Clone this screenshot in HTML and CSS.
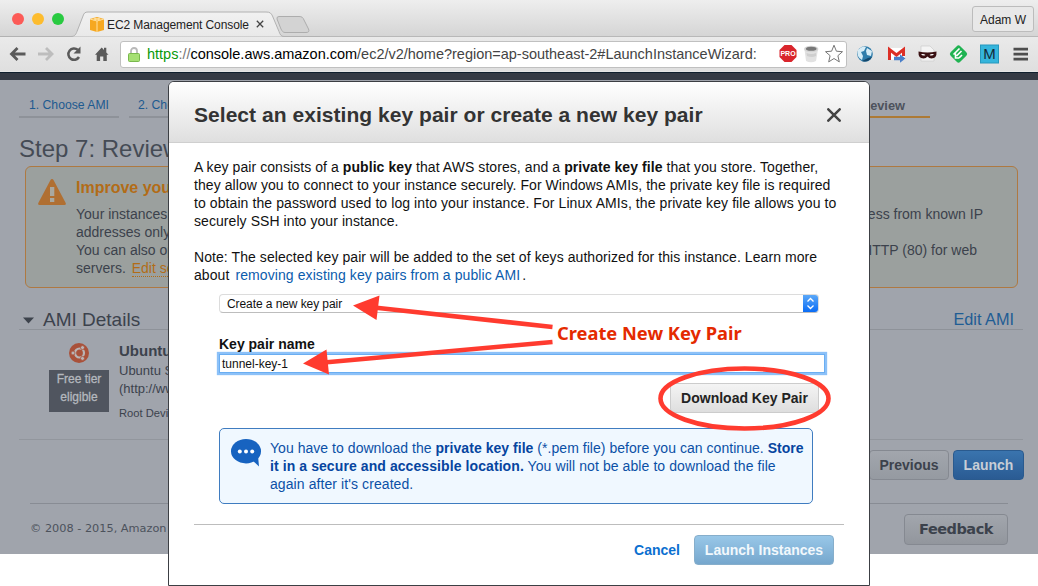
FILE: index.html
```html
<!DOCTYPE html>
<html lang="en">
<head>
<meta charset="utf-8">
<title>EC2 Management Console</title>
<link rel="stylesheet" href="styles.css">
</head>
<body>
<header class="chrome">
  <div class="tabstrip">
    <svg class="tab-shape" width="320" height="37" viewBox="0 0 320 37">
      <defs>
        <linearGradient id="tabfill" x1="0" y1="0" x2="0" y2="1"><stop offset="0" stop-color="#f1f1f1"/><stop offset="1" stop-color="#e9e9e9"/></linearGradient>
      </defs>
      <path d="M0 36.5H71C75 36.5 76 34 77 31.500L83 16C84 13 85 12 88 12H266C270 12 271 13 272.500 16L279 31.500C280 34.500 281 36.500 284 36.500H320" fill="url(#tabfill)" stroke="#b2b2b2"/>
      <path d="M279 16.500H299C302 16.500 303 17.500 304 20L308.500 29C309.500 31.500 308.500 32.500 306 32.500H285C283 32.500 282 31 281 29L277 19Q276.500 16.500 279 16.500Z" fill="#d3d3d3" stroke="#adadad"/>
    </svg>
    <div class="lights"><i class="red"></i><i class="yellow"></i><i class="green"></i></div>
    <div class="tab">
      <svg width="14" height="15" viewBox="0 0 14 15"><path d="M0 2 7 0l7 2v11l-7 2-7-2z" fill="#f6a821"/><path d="M0 2 7 4l7-2M7 4v11M3.500 1 10.500 3M10.500 1 3.500 3" stroke="#ffe0a0" fill="none"/></svg>
      <span class="tab-title">EC2 Management Console</span>
      <svg class="tab-x" width="8" height="8" viewBox="0 0 8 8"><path d="M.8.800 7.200 7.200M7.200.800.800 7.200" stroke="#444" stroke-width="1.300"/></svg>
    </div>
    <span class="user">Adam W</span>
  </div>
  <div class="toolbar">
    <svg class="nav" width="120" height="20" viewBox="0 0 120 20">
      <g fill="none" stroke-width="2.800"><path d="M17.500 10H4M9.500 4 3.500 10l6 6" stroke="#5a5a5a" transform="translate(8 0)"/><path d="M38 10H51.500M46 4l6 6-6 6" stroke="#bdbdbd"/><path d="M79 13A5.700 5.700 0 1 1 77.800 5.800" stroke="#5a5a5a" stroke-width="2.500"/></g>
      <path d="M80.500 2.500v7H73.500z" fill="#5a5a5a"/>
      <path d="M95 10.700 101.700 3.500l2.300 2.400V3.800h2.300V8.400l2.200 2.300h-1.700V17h-3.500v-4.500h-3.200V17H96.700v-6.300z" fill="#5a5a5a"/>
    </svg>
    <div class="omnibox">
      <svg width="12" height="15" viewBox="0 0 12 15"><path d="M3 7V4a3 3 0 0 1 6 0v3" fill="none" stroke="#b9b9b9" stroke-width="1.800"/><rect x=".5" y="6.500" width="11" height="8" rx="1" fill="#a5df73" stroke="#79b84d"/></svg>
      <span class="url"><b>https</b><i>://</i>console.aws.amazon.com<span class="path">/ec2/v2/home?region=ap-southeast-2#LaunchInstanceWizard:</span></span>
      <svg class="omni-icons" width="66" height="20" viewBox="0 0 66 20">
        <path d="M6.500 1h7l5 5v7l-5 5h-7l-5-5V6z" fill="#d9252c"/><text x="10" y="12.300" text-anchor="middle" class="pro">PRO</text>
        <path d="M26.500 5.500 28 17q5 2.500 10 0L40 5.500z" fill="#e2e2e2"/><ellipse cx="33.200" cy="5" rx="7.200" ry="3.300" fill="#d4d4d4"/><ellipse cx="33.200" cy="4.800" rx="5.300" ry="2" fill="#777"/><path d="M28.500 9q5 2 9.500 0v3q-4 2-9 0z" fill="#cfcfcf"/>
        <path d="m56 1.200 2.400 6 6.100.5-4.600 4 1.400 6.200-5.300-3.400-5.300 3.400 1.400-6.200-4.600-4 6.100-.5z" fill="#fff" stroke="#777"/>
      </svg>
    </div>
    <svg class="ext" width="176" height="22" viewBox="0 0 176 22">
      <circle cx="13" cy="11" r="7.800" fill="#2f7dab"/><path d="M6 7q4-5 8-3l-2 4-3 1 2 4-1 4Q4 14 6 7M15 5l5 3-1 5-4-1-1-4z" fill="#d6ecf6"/><path d="M10 18q6 2 10-4l-4 1z" fill="#14476b"/>
      <rect x="36" y="4.500" width="17" height="12.500" fill="#fff" stroke="#ddd" stroke-width=".5"/><path d="M37.500 17V6.500l7 5.500 7-5.500V13" fill="none" stroke="#dc2f26" stroke-width="3"/><path d="M42 13.800h6v-2.500l5.500 4.200-5.500 4.200v-2.400h-6z" fill="#4a7fc9"/>
      <path d="M69 3h9l4 4v11H69z" fill="#f4f4f4" stroke="#ccc" stroke-width=".7"/><path d="M66.500 8.500q9 2 18 0 .5 7-5 7-2.500 0-4-2-1.500 2-4 2-5.500 0-5-7z" fill="#3a1113"/><path d="M69 11.300q2.500-1 4.500.7-2.500 1.500-4.500-.7M82 11.300q-2.500-1-4.500.7 2.500 1.500 4.500-.7" fill="#fff"/>
      <rect x="99.700" y="4.200" width="13.600" height="13.600" rx="2.500" transform="rotate(45 106.500 11)" fill="#20b352"/><path d="m101.500 11.500 6-6M104.500 13l5-5M107 15l3-3M103.500 10.500v4.500h3.500" stroke="#fff" stroke-width="1.600" fill="none"/>
      <rect x="128.500" y="2" width="18" height="18" fill="#35b5dc" stroke="#2798bd"/><text x="137.500" y="15.500" text-anchor="middle" class="m">M</text>
      <path d="M161.500 6.200h14.500M161.500 11.200h14.500M161.500 16.200h14.500" stroke="#4e4e4e" stroke-width="2.800"/>
    </svg>
  </div>
</header>

<main class="page">
  <div class="topbar"></div>
  <nav class="steps">
    <span class="step s1">1. Choose AMI</span><span class="step s2">2. Choose</span><span class="step active">7. Review</span>
  </nav>
  <h1 class="title">Step 7: Review</h1>
  <section class="alert">
    <svg width="28" height="26" viewBox="0 0 28 26"><path d="M14 0q1 0 1.500 1L27.700 24q.6 2-1.200 2h-25Q-.3 26 .3 24L12.500 1Q13 0 14 0z" fill="#b06f32"/><path d="M12 8h4.300v9H12zM12 19h4.300v4H12z" fill="#a9a8a0"/></svg>
    <div class="alert-body">
      <h2>Improve your</h2>
      <p><span>Your instances</span><span>access from known IP</span></p>
      <p><span>addresses only.</span></p>
      <p><span>You can also open</span><span class="r2">HTTP (80) for web</span></p>
      <p><span>servers. <a>Edit sec</a></span></p>
    </div>
  </section>
  <div class="section-head"><svg width="11" height="7" viewBox="0 0 11 7"><path d="M0 .5h11l-5.500 6z" fill="#3d434c"/></svg><h3>AMI Details</h3><a>Edit AMI</a></div>
  <section class="ami">
    <div class="ami-badge">
      <svg width="20" height="20" viewBox="0 0 20 20"><circle cx="10" cy="10" r="10" fill="#a9513a"/><circle cx="10.500" cy="10" r="4.500" fill="none" stroke="#b9b4b5" stroke-width="2.200"/><g fill="#b9b4b5" stroke="#a9513a" stroke-width=".8"><circle cx="4" cy="10" r="2"/><circle cx="13.500" cy="4.600" r="2"/><circle cx="13.500" cy="15.400" r="2"/></g></svg>
      <span class="tier">Free tier<br>eligible</span>
    </div>
    <div class="ami-text"><b>Ubuntu</b><span>Ubuntu Se</span><span>(http://ww</span><small>Root Device</small></div>
  </section>
  <div class="actions"><span class="btn prev">Previous</span><span class="btn launch">Launch</span></div>
  <footer class="foot"><span class="copy">© 2008 - 2015, Amazon</span><span class="btn feedback">Feedback</span></footer>
</main>

<div class="modal">
  <div class="modal-head"><h2>Select an existing key pair or create a new key pair</h2>
    <svg width="14" height="14" viewBox="0 0 14 14"><path d="M1.300 1.300 12.700 12.700M12.700 1.300 1.300 12.700" stroke="#444" stroke-width="2.500" stroke-linecap="round"/></svg>
  </div>
  <div class="modal-body">
    <p class="para">
      <span>A key pair consists of a <b>public key</b> that AWS stores, and a <b>private key file</b> that you store. Together,</span>
      <span>they allow you to connect to your instance securely. For Windows AMIs, the private key file is required</span>
      <span class="wide">to obtain the password used to log into your instance. For Linux AMIs, the private key file allows you to</span>
      <span>securely SSH into your instance.</span>
    </p>
    <p class="para">
      <span>Note: The selected key pair will be added to the set of keys authorized for this instance. Learn more</span>
      <span class="wide">about <a>removing existing key pairs from a public AMI</a>.</span>
    </p>
    <div class="select"><span>Create a new key pair</span>
      <svg width="15" height="17" viewBox="0 0 15 17"><defs><linearGradient id="sel" x1="0" y1="0" x2="0" y2="1"><stop offset="0" stop-color="#5ba8f8"/><stop offset="1" stop-color="#0a6cf5"/></linearGradient></defs><path d="M0 0h12q3 0 3 3v11q0 3-3 3H0z" fill="url(#sel)"/><path d="m4.500 6.500 3-3 3 3M4.500 10.500l3 3 3-3" fill="none" stroke="#fff" stroke-width="1.300"/></svg>
    </div>
    <label class="label">Key pair name</label>
    <div class="input">tunnel-key-1</div>
    <div class="download-row"><span class="btn download">Download Key Pair</span></div>
    <div class="info">
      <svg width="31" height="28" viewBox="0 0 31 28"><ellipse cx="15" cy="12.200" rx="15" ry="12.200" fill="#1763c0"/><path d="M20 20 28 27.500 27 17z" fill="#1763c0"/><g fill="#fff"><circle cx="8.800" cy="12.500" r="2"/><circle cx="15" cy="12.500" r="2"/><circle cx="21.200" cy="12.500" r="2"/></g></svg>
      <p>
        <span>You have to download the <b>private key file</b> (*.pem file) before you can continue. <b>Store</b></span>
        <span class="wide"><b>it in a secure and accessible location.</b> You will not be able to download the file</span>
        <span class="wide">again after it's created.</span>
      </p>
    </div>
    <div class="modal-foot"><a>Cancel</a><span class="btn launch-inst">Launch Instances</span></div>
  </div>
</div>

<svg class="marks" width="1038" height="586" viewBox="0 0 1038 586">
  <g stroke="#ff3b2f" stroke-width="4.600" fill="none"><path d="M552.500 327 374 307.500M552.500 342 324 362.500"/><ellipse cx="744.500" cy="398.500" rx="84" ry="30"/></g>
  <path d="M353 305.500 379.500 295.500 376.500 320zM303 363.500 326.500 349.500 329 374.500z" fill="#ff3b2f"/>
</svg>
<div class="mark-label">Create New Key Pair</div>
</body>
</html>
```

FILE: styles.css
```css
* { box-sizing: border-box; }
html, body { margin: 0; padding: 0; }
body { position: relative; width: 1038px; height: 586px; overflow: hidden; background: #fff; font-family: "Liberation Sans", Arial, sans-serif; color: #222; }
h1, h2, h3, p { margin: 0; }
svg { display: block; flex: none; }
span, a, h1, h2, h3, label { white-space: nowrap; }

.chrome { height: 72px; background: #e6e6e6; }
.tabstrip { position: relative; display: flex; align-items: flex-start; height: 37px; background: linear-gradient(#eeeeee, #d5d5d5); border-bottom: 1px solid #b8b8b8; }
.tab-shape { position: absolute; left: 0; top: 0; }
.lights { position: relative; display: flex; gap: 8px; padding: 13px 0 0 12px; }
.lights i { width: 12px; height: 12px; border-radius: 50%; }
.red { background: #fc5b57; }
.yellow { background: #fdbc2e; }
.green { background: #29ca41; }
.tab { position: relative; display: flex; align-items: center; height: 15px; margin: 17px 0 0 26px; }
.tab-title { margin-left: 3px; font-size: 12px; letter-spacing: -.1px; color: #222; width: 149px; }
.tab-x { margin-top: -1px; }
.user { margin: 6px 4px 0 auto; width: 62px; height: 26px; border: 1px solid #bcbcbc; border-radius: 3px; background: #e8e8e8; font-size: 12px; line-height: 26px; text-align: center; color: #222; }
.toolbar { display: flex; align-items: center; height: 34px; background: linear-gradient(#eaeaea, #dfdfdf); }
.nav { width: 120px; }
.omnibox { display: flex; align-items: center; width: 727px; height: 27px; border: 1px solid #c0c0c0; border-radius: 3px; background: #fff; padding: 0 2px 0 7px; }
.url { margin-left: 7px; font-size: 14.500px; letter-spacing: -.01px; color: #000; }
.url b { font-weight: 400; color: #0a9a0a; }
.url i { font-style: normal; color: #777; }
.path { color: #444; }
.omni-icons { margin-left: auto; }
.pro { font: bold 7px "Liberation Sans", sans-serif; fill: #fff; }
.m { font: 15px "Liberation Sans", sans-serif; fill: #122a38; }
.ext { margin-left: 5px; }

.page { height: 482px; background: #a0a4ac; color: #3c424c; }
.topbar { height: 8px; background: #353b45; border-top: 1px solid #10202e; }
.steps { display: flex; height: 38px; padding: 0 108px 0 19px; }
.step { height: 38px; padding: 17px 10px 0; font-size: 12.200px; line-height: 17px; color: #1d5a90; border-bottom: 2px solid #8e9299; }
.s1 { width: 100px; }
.s2 { width: 100px; margin-left: 10px; padding-left: 9px; }
.active { margin-left: auto; padding-right: 25px; font-size: 12.800px; font-weight: 700; color: #4d525c; border-color: #ad7a35; }
.title { height: 48px; padding-left: 19px; font-size: 24px; font-weight: 400; line-height: 62px; color: #454b55; }
.alert { display: flex; margin: 0 20px 0 25px; height: 122px; border: 1px solid #ae7942; border-radius: 6px; background: #9ba09e; padding: 12px 34px 0 12px; }
.alert-body { flex: 1; margin-left: 10px; }
.alert-body h2 { height: 26px; font-size: 16px; line-height: 17px; color: #b26c17; }
.alert-body p { display: flex; justify-content: space-between; font-size: 14px; line-height: 18px; }
.alert-body a { margin-left: 2px; color: #b26c17; border-bottom: 1px dotted #b26c17; }
.r2 { margin-right: 6px; }
.section-head { display: flex; align-items: center; height: 42px; margin: 0 15px 0 19px; padding: 23px 9px 0 4px; border-bottom: 1px solid #8e9299; }
.section-head h3 { margin-left: 9px; font-size: 19px; font-weight: 400; line-height: 18px; }
.section-head a { margin: -3px 0 0 auto; font-size: 16.300px; line-height: 16px; color: #1f5d94; }
.ami { display: flex; height: 110px; margin: 0 15px 0 19px; padding: 13px 0 0 30px; border-bottom: 1px solid #92969d; }
.ami-badge { display: flex; flex-direction: column; align-items: center; gap: 7px; width: 60px; }
.tier { width: 60px; height: 42px; background: #50555f; color: #b4b8be; font-size: 12px; line-height: 18px; text-align: center; -webkit-text-stroke: .3px #b4b8be; }
.ami-text { display: flex; flex-direction: column; margin-left: 10px; font-size: 13px; line-height: 18px; }
.ami-text b { font-size: 15px; line-height: 15px; margin-bottom: 4px; }
.ami-text small { font-size: 11.200px; margin-top: 6px; }
.btn { display: inline-block; border: 1px solid #858991; border-radius: 4px; font-size: 14px; font-weight: 700; text-align: center; }
.actions { display: flex; justify-content: flex-end; gap: 4px; padding: 10px 14px 0 0; height: 63px; }
.prev { width: 80px; height: 30px; line-height: 28px; background: linear-gradient(#a2a6ad, #959aa1); }
.launch { width: 71px; height: 30px; line-height: 28px; color: #c8ced6; border-color: #2a5a8e; background: linear-gradient(#3a74ae, #2a5b93); }
.foot { display: flex; justify-content: space-between; margin: 0 30px; padding-top: 10px; border-top: 1px solid #888c94; font-family: "DejaVu Sans", Verdana, sans-serif; }
.copy { font-size: 11.300px; line-height: 29px; color: #4c525c; }
.feedback { width: 104px; height: 31px; font-size: 14.500px; letter-spacing: -.5px; line-height: 29px; background: linear-gradient(#a2a6ad, #92969d); }

.modal { position: absolute; left: 168px; top: 81px; width: 702px; height: 505px; border: 1px solid #3c3f44; border-radius: 6px 6px 0 0; background: #fff; overflow: hidden; }
.modal-head { display: flex; align-items: center; justify-content: space-between; height: 61px; padding: 5px 28px 0 25px; background: linear-gradient(#ffffff, #dfdfdf); border-bottom: 1px solid #cfcfcf; }
.modal-head h2 { font-size: 21px; letter-spacing: .04px; color: #333; }
.modal-body { padding: 15px 25px 0; color: #111; }
.para { margin-bottom: 18px; font-size: 14px; line-height: 18px; letter-spacing: .07px; }
.wide { letter-spacing: .085px; }
.para span, .info p span { display: block; }
.para a { color: #0b5cad; margin: 0 2px; }
.select { display: flex; align-items: center; justify-content: space-between; width: 600px; height: 19px; margin: -8px 0 0 25px; padding-left: 7px; border: 1px solid #dcdcdc; border-bottom-color: #bdbdbd; border-radius: 4px; font-size: 12px; letter-spacing: -.08px; }
.label { display: block; margin: 22px 0 0 25px; font-size: 14px; font-weight: 700; line-height: 18px; }
.input { width: 606px; height: 19px; margin: 1px 0 0 25px; padding-left: 2px; border: 1px solid #6aaef2; box-shadow: 0 0 1px 2px #8cc1f8; font-size: 12px; line-height: 18px; }
.download-row { display: flex; justify-content: flex-end; padding: 10px 25px 0 0; }
.download { width: 149px; height: 30px; line-height: 28px; border-color: #ccc; color: #222; background: linear-gradient(#f4f4f4, #dedede); }
.info { display: flex; width: 594px; height: 76px; margin: 15px 0 0 25px; padding: 10px 8px 0 11px; border: 1px solid #3f7cc0; border-radius: 5px; background: #f0f8ff; color: #0b50a6; }
.info p { margin-left: 8px; font-size: 14px; line-height: 18px; letter-spacing: .04px; }
.info b { color: #0645a0; }
.modal-foot { display: flex; align-items: center; justify-content: flex-end; gap: 14px; margin-top: 20px; padding: 10px 10px 0 0; border-top: 1px solid #bdbdbd; }
.modal-foot a { font-size: 14px; font-weight: 700; color: #0b6fd0; }
.launch-inst { width: 140px; height: 30px; line-height: 28px; color: #f2f8fc; border-color: #86aecb; background: linear-gradient(#98c7e8, #76a7cd); }

.marks { position: absolute; left: 0; top: 0; }
.mark-label { position: absolute; left: 557px; top: 321px; font: bold 18.300px/24px "Noto Sans", Tahoma, sans-serif; color: #e42a00; white-space: nowrap; }
```
